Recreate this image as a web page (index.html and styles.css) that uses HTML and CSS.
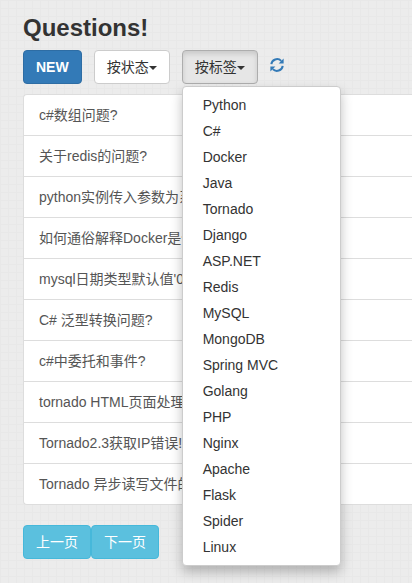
FILE: index.html
```html
<!DOCTYPE html>
<html>
<head>
  <title>Questions</title>
  <link rel="stylesheet" href="styles.css">
</head>
<body>
  <h1>Questions!</h1>

  <div class="toolbar">
    <button class="btn btn-new">NEW</button>
    <button class="btn">按状态<span class="caret"></span></button>
    <div class="dropdown">
      <button class="btn btn-open">按标签<span class="caret"></span></button>
      <ul class="menu">
        <li>Python</li>
        <li>C#</li>
        <li>Docker</li>
        <li>Java</li>
        <li>Tornado</li>
        <li>Django</li>
        <li>ASP.NET</li>
        <li>Redis</li>
        <li>MySQL</li>
        <li>MongoDB</li>
        <li>Spring MVC</li>
        <li>Golang</li>
        <li>PHP</li>
        <li>Nginx</li>
        <li>Apache</li>
        <li>Flask</li>
        <li>Spider</li>
        <li>Linux</li>
      </ul>
    </div>
    <svg class="refresh" width="14" height="14" viewBox="0 0 14 14">
      <path d="M1.3 6.2A5.8 5.8 0 0 1 11.2 2.9" fill="none" stroke="#337ab7" stroke-width="2"/>
      <path d="M13.6 0.6V5.6H8.6Z" fill="#337ab7"/>
      <path d="M12.7 7.8A5.8 5.8 0 0 1 2.8 11.1" fill="none" stroke="#337ab7" stroke-width="2"/>
      <path d="M0.4 13.4V8.4H5.4Z" fill="#337ab7"/>
    </svg>
  </div>

  <ul class="questions">
    <li>c#数组问题?</li>
    <li>关于redis的问题?</li>
    <li>python实例传入参数为系统对象的问题</li>
    <li>如何通俗解释Docker是什么?</li>
    <li>mysql日期类型默认值'0000'</li>
    <li>C# 泛型转换问题?</li>
    <li>c#中委托和事件?</li>
    <li>tornado HTML页面处理问题</li>
    <li>Tornado2.3获取IP错误!</li>
    <li>Tornado 异步读写文件的问题</li>
  </ul>

  <div class="pager">
    <button class="btn btn-info">上一页</button>
    <button class="btn btn-info">下一页</button>
  </div>
</body>
</html>
```

FILE: styles.css
```css
html {
  overflow: hidden;
}
body {
  font-family: "Liberation Sans", "Noto Sans CJK SC", sans-serif;
  font-size: 14px;
  line-height: 20px;
  color: #333;
  margin: 0;
  padding: 15px 0 0 23px;
  height: 583px;
  box-sizing: border-box;
  overflow: hidden;
  background-color: #ececec;
  background-image:
    linear-gradient(#e8e8e8 1px, transparent 1px),
    linear-gradient(90deg, #e8e8e8 1px, transparent 1px);
  background-size: 8px 8px;
}
h1 {
  font-size: 24px;
  line-height: 26px;
  font-weight: bold;
  margin: 0 0 9px;
}
.toolbar {
  display: flex;
  align-items: flex-start;
  gap: 12px;
  height: 34px;
  margin-bottom: 10px;
}
.btn {
  font-family: inherit;
  font-size: 14px;
  line-height: 20px;
  color: #333;
  background: #fff;
  border: 1px solid #ccc;
  border-radius: 4px;
  padding: 6px 12px;
  height: 34px;
  white-space: nowrap;
}
.btn-new {
  background: #337ab7;
  border-color: #2e6da4;
  color: #fff;
  font-weight: bold;
}
.btn-open {
  background: #e6e6e6;
  border-color: #adadad;
  box-shadow: inset 0 3px 5px rgba(0, 0, 0, .125);
}
.btn-info {
  background: #5bc0de;
  border-color: #46b8da;
  color: #fff;
}
.caret {
  display: inline-block;
  vertical-align: middle;
  border-top: 4px solid #333;
  border-left: 4px solid transparent;
  border-right: 4px solid transparent;
}
.dropdown {
  position: relative;
}
.menu {
  position: absolute;
  top: 36px;
  left: 0;
  z-index: 10;
  width: 159px;
  box-sizing: border-box;
  list-style: none;
  margin: 0;
  padding: 5px 0;
  background: #fff;
  border: 1px solid #ccc;
  border-radius: 4px;
  box-shadow: 0 6px 12px rgba(0, 0, 0, .25);
}
.menu li {
  height: 26px;
  line-height: 26px;
  padding: 0 20px;
}
.refresh {
  margin-top: 8px;
}
.questions {
  list-style: none;
  margin: 0 0 20px;
  padding: 0;
  color: #555;
}
.questions li {
  height: 42px;
  box-sizing: border-box;
  padding: 10px 15px;
  background: #fff;
  border: 1px solid #ddd;
  border-right: none;
  margin-bottom: -1px;
  white-space: nowrap;
  overflow: hidden;
}
.questions li:first-child {
  border-top-left-radius: 4px;
}
.questions li:last-child {
  border-bottom-left-radius: 4px;
  margin-bottom: 0;
}
.pager {
  display: flex;
}
```
